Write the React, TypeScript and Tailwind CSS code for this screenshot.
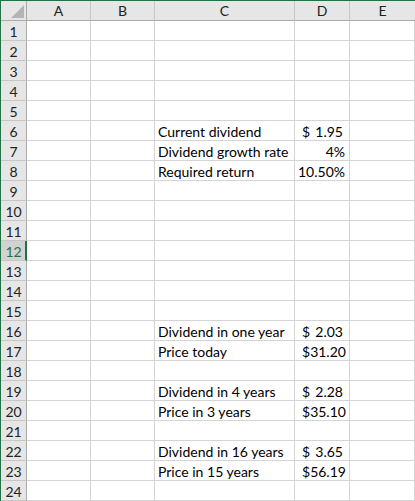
import React from "react";

type Val = { kind: "acct"; v: string } | { kind: "pct"; v: string };

const rows: Record<number, { label: string; value: Val }> = {
  6: { label: "Current dividend", value: { kind: "acct", v: "1.95" } },
  7: { label: "Dividend growth rate", value: { kind: "pct", v: "4%" } },
  8: { label: "Required return", value: { kind: "pct", v: "10.50%" } },
  16: { label: "Dividend in one year", value: { kind: "acct", v: "2.03" } },
  17: { label: "Price today", value: { kind: "acct", v: "31.20" } },
  19: { label: "Dividend in 4 years", value: { kind: "acct", v: "2.28" } },
  20: { label: "Price in 3 years", value: { kind: "acct", v: "35.10" } },
  22: { label: "Dividend in 16 years", value: { kind: "acct", v: "3.65" } },
  23: { label: "Price in 15 years", value: { kind: "acct", v: "56.19" } },
};

const ACTIVE_ROW = 12;
const font = { fontFamily: "Lato, 'Liberation Sans', sans-serif" };

function Cell({ children, className = "" }: { children?: React.ReactNode; className?: string }) {
  return (
    <div className={`h-[20px] border-b border-r border-[#d4d4d4] flex items-end overflow-hidden ${className}`}>
      {children}
    </div>
  );
}

function ValueCell({ value }: { value?: Val }) {
  if (!value) return <Cell />;
  if (value.kind === "pct") {
    return (
      <Cell className="justify-end pr-[4px]">
        <span className="leading-[14px] pb-[1px]">{value.v}</span>
      </Cell>
    );
  }
  return (
    <Cell className="justify-between pl-[7px] pr-[6px]">
      <span className="leading-[14px] pb-[1px]">$</span>
      <span className="leading-[14px] pb-[1px]">{value.v}</span>
    </Cell>
  );
}

export default function App() {
  const cols = ["A", "B", "C", "D", "E"];
  const rowNums = Array.from({ length: 24 }, (_, i) => i + 1);
  return (
    <div
      className="w-[415px] h-[501px] overflow-hidden bg-white border-t border-l border-[#217346] text-[14px] text-black"
      style={font}
    >
      <div className="grid grid-cols-[26px_64px_64px_140px_55px_1fr]">
        {/* corner */}
        <div className="h-[20px] bg-[#e6e6e6] border-b border-r border-[#ababab] relative">
          <svg className="absolute left-[10px] top-[4px]" width="14" height="14" viewBox="0 0 14 14">
            <polygon points="13,0 13,13 0,13" fill="#b4b4b4" />
          </svg>
        </div>
        {cols.map((c, i) => (
          <div
            key={c}
            className={`h-[20px] bg-[#e6e6e6] border-b border-[#ababab] flex items-center justify-center text-[#222] leading-none pt-[1px] ${
              i < cols.length - 1 ? "border-r border-r-[#c6c6c6]" : ""
            }`}
          >
            {c}
          </div>
        ))}

        {rowNums.map((r) => {
          const active = r === ACTIVE_ROW;
          const data = rows[r];
          return (
            <React.Fragment key={r}>
              <div
                className={`h-[20px] border-b flex items-center justify-center leading-none pt-[2px] ${
                  active
                    ? "bg-[#d2d2d2] border-b-[#c6c6c6] border-r-2 border-r-[#217346] text-[#217346] pl-[1px]"
                    : "bg-[#e6e6e6] border-b-[#c6c6c6] border-r border-r-[#ababab] text-[#222]"
                }`}
              >
                {r}
              </div>
              <Cell />
              <Cell />
              <Cell className="pl-[3px]">
                {data && <span className="leading-[14px] pb-[1px] whitespace-nowrap">{data.label}</span>}
              </Cell>
              <ValueCell value={data?.value} />
              <Cell />
            </React.Fragment>
          );
        })}
      </div>
    </div>
  );
}
